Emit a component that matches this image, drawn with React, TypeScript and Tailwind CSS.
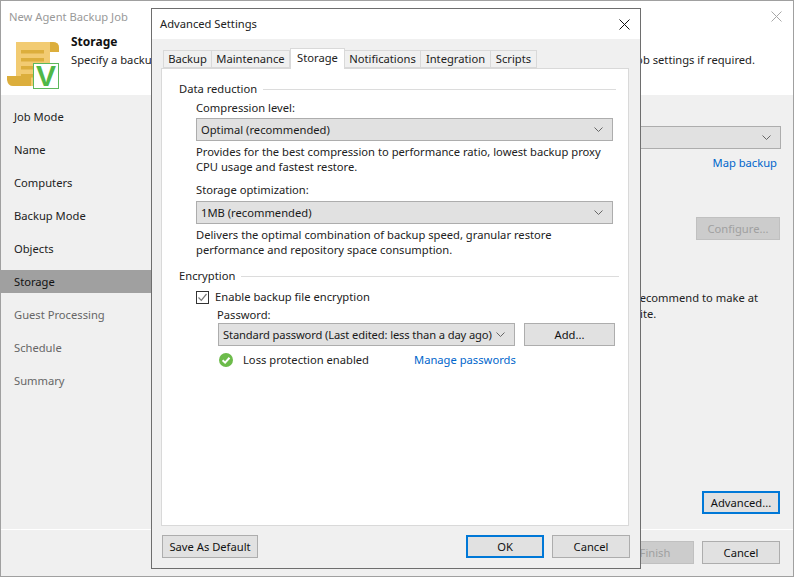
const Chevron = () => (
  <svg width="9" height="5" viewBox="0 0 9 5" className="shrink-0">
    <path d="M0.5 0.5 L4.5 4.5 L8.5 0.5" fill="none" stroke="#666" strokeWidth="1" />
  </svg>
);

const CloseIcon = ({ color }: { color: string }) => (
  <svg width="11" height="11" viewBox="0 0 11 11">
    <path d="M0.5 0.5 L10.5 10.5 M10.5 0.5 L0.5 10.5" fill="none" stroke={color} strokeWidth="1" />
  </svg>
);

const Combo = ({ text, className }: { text: string; className: string }) => (
  <div className={`flex h-[23px] items-center justify-between border border-[#adadad] bg-[#e1e1e1] pl-[4px] pr-[9px] text-[#1a1a1a] ${className}`}>
    <span className="whitespace-nowrap">{text}</span>
    <Chevron />
  </div>
);

const Button = ({ label, className, primary }: { label: string; className: string; primary?: boolean }) => (
  <div
    className={`flex h-[23px] items-center justify-center bg-[#e1e1e1] text-[#111] ${
      primary ? 'border-2 border-[#0078d7]' : 'border border-[#adadad]'
    } ${className}`}
  >
    {label}
  </div>
);

const ScrollLogo = () => (
  <div className="relative h-[47px] w-[52px] shrink-0">
    <svg width="52" height="47" viewBox="0 0 52 47" className="block">
      <path d="M9 0 H46 Q52 0 52 6 V10 H43 V44 H16 V34 H9 Z" fill="#f2cb72" />
      <path d="M43 0 H46 Q52 0 52 6 V10 H43 Z" fill="#dcae3c" />
      <path d="M0 34 H24 V44 H6 Q1 44 0 38 Z" fill="#dcae3c" />
      <rect x="14" y="8" width="23" height="3.5" fill="#dcae3c" />
      <rect x="14" y="16" width="23" height="3.5" fill="#dcae3c" />
      <rect x="14" y="24" width="12" height="3.5" fill="#dcae3c" />
      <rect x="14" y="32" width="12" height="3.5" fill="#dcae3c" />
    </svg>
    <div className="absolute left-[26px] top-[21px] flex h-[26px] w-[26px] items-center justify-center border border-[#5cb85c] bg-white font-['Liberation_Sans',sans-serif] text-[30px] font-bold leading-none text-[#4fb848]">
      V
    </div>
  </div>
);

const steps = ['Job Mode', 'Name', 'Computers', 'Backup Mode', 'Objects', 'Storage', 'Guest Processing', 'Schedule', 'Summary'];
const tabs = [
  { name: 'Backup', w: 'w-[49px]' },
  { name: 'Maintenance', w: 'w-[78px]' },
  { name: 'Storage', w: 'w-[55px]' },
  { name: 'Notifications', w: 'w-[76px]' },
  { name: 'Integration', w: 'w-[70px]' },
  { name: 'Scripts', w: 'w-[46px]' },
];

const GroupTitle = ({ title }: { title: string }) => (
  <div className="flex h-[16px] items-center gap-[6px]">
    <span className="whitespace-nowrap">{title}</span>
    <div className="h-px flex-1 bg-[#dcdcdc]" />
  </div>
);

const AdvancedSettings = () => (
  <div className="absolute left-[150px] top-[7px] flex h-[561px] w-[490px] flex-col border border-[#6e6e6e] bg-[#f0f0f0]">
    <div className="flex h-[30px] items-center justify-between bg-white pl-[8px] pr-[10px]">
      <span className="text-[#222]">Advanced Settings</span>
      <CloseIcon color="#111" />
    </div>
    {/* tabs */}
    <div className="relative z-10 flex h-[29px] items-end pl-[11px]">
      {tabs.map((t) =>
        t.name === 'Storage' ? (
          <div key={t.name} className={`-mb-px flex h-[21px] items-start justify-center border-x border-t border-[#d9d9d9] bg-white pt-px ${t.w}`}>
            {t.name}
          </div>
        ) : (
          <div key={t.name} className={`flex h-[18px] items-center justify-center border-y border-r border-[#d9d9d9] first:border-l ${t.w}`}>
            {t.name}
          </div>
        )
      )}
    </div>
    {/* panel */}
    <div className="ml-[9px] mr-[11px] flex h-[458px] flex-col border border-[#d9d9d9] bg-white pl-[17px] pr-[12px] pt-[12px]">
      <GroupTitle title="Data reduction" />
      <div className="pl-[17px] pr-[3px]">
        <div className="mt-[3px] h-[16px] leading-[16px]">Compression level:</div>
        <Combo text="Optimal (recommended)" className="mt-[2px] w-[417px]" />
        <p className="mt-[3px] whitespace-nowrap leading-[15px]">
          Provides for the best compression to performance ratio, lowest backup proxy
          <br />
          CPU usage and fastest restore.
        </p>
        <div className="mt-[8px] h-[16px] leading-[16px]">Storage optimization:</div>
        <Combo text="1MB (recommended)" className="mt-[3px] w-[417px]" />
        <p className="mt-[3px] whitespace-nowrap leading-[15px]">
          Delivers the optimal combination of backup speed, granular restore
          <br />
          performance and repository space consumption.
        </p>
      </div>
      <div className="-mr-[3px] mt-[11px]">
        <GroupTitle title="Encryption" />
      </div>
      <div className="pl-[17px]">
        <div className="mt-[5px] flex h-[16px] items-center gap-[6px]">
          <div className="flex h-[13px] w-[13px] items-center justify-center border border-[#333] bg-white">
            <svg width="11" height="11" viewBox="0 0 11 11">
              <path d="M1.5 5.5 L4.3 8.3 L9.5 2" fill="none" stroke="#777" strokeWidth="1.2" />
            </svg>
          </div>
          <span>Enable backup file encryption</span>
        </div>
        <div className="ml-[21px] mt-[2px] h-[16px] leading-[16px]">Password:</div>
        <div className="ml-[22px] flex gap-[9px]">
          <Combo text="Standard password (Last edited: less than a day ago)" className="w-[297px] tracking-[-0.13px]" />
          <Button label="Add..." className="w-[91px]" />
        </div>
        <div className="ml-[23px] mt-[6px] flex h-[16px] items-center">
          <svg width="14" height="14" viewBox="0 0 14 14" className="shrink-0">
            <circle cx="7" cy="7" r="7" fill="#6cbb4a" />
            <path d="M3.6 7.2 L6.1 9.6 L10.5 4.8" fill="none" stroke="#fff" strokeWidth="2" />
          </svg>
          <span className="ml-[10px] w-[171px]">Loss protection enabled</span>
          <span className="text-[#0066cc]">Manage passwords</span>
        </div>
      </div>
    </div>
    {/* bottom buttons */}
    <div className="flex items-center justify-between pl-[10px] pr-[10px] pt-[9px]">
      <Button label="Save As Default" className="w-[96px]" />
      <div className="flex gap-[8px]">
        <Button label="OK" className="w-[78px]" primary />
        <Button label="Cancel" className="w-[78px]" />
      </div>
    </div>
  </div>
);

export default function App() {
  return (
    <div className="relative flex h-[577px] w-[794px] flex-col overflow-hidden border border-[#a0a0a0] bg-[#f0f0f0] font-['Noto_Sans',sans-serif] text-[11.2px] leading-[16px] text-[#222]">
      {/* header */}
      <div className="h-[94px] bg-white">
        <div className="flex h-[31px] items-center justify-between pl-[8px] pr-[11px] text-[#999]">
          <span>New Agent Backup Job</span>
          <CloseIcon color="#a8a8a8" />
        </div>
        <div className="flex pl-[6px] pt-[10px]">
          <ScrollLogo />
          <div className="-mt-[8px] ml-[12px] flex-1 pr-[38px]">
            <div className="text-[12px] font-bold text-[#111]">Storage</div>
            <div className="mt-[2px] flex justify-between">
              <span>Specify a backup</span>
              <span>job settings if required.</span>
            </div>
          </div>
        </div>
      </div>

      {/* body */}
      <div className="flex h-[434px]">
        <div className="flex w-[150px] flex-col gap-[10px] pt-[10px]">
          {steps.map((s, i) => (
            <div
              key={s}
              className={`flex h-[23px] items-center pl-[13px] ${
                s === 'Storage' ? 'bg-[#a0a0a0] text-[#111]' : i > 5 ? 'text-[#666]' : 'text-[#222]'
              }`}
            >
              {s}
            </div>
          ))}
        </div>
        <div className="flex flex-1 flex-col items-end pb-[15px] pr-[12px] pt-[31px]">
          <div className="flex h-[23px] w-[141px] items-center justify-end border border-[#adadad] bg-[#e1e1e1] pr-[9px]">
            <Chevron />
          </div>
          <div className="mr-[4px] mt-[6px] text-[#0066cc]">Map backup</div>
          <div className="mr-px mt-[46px] flex h-[23px] w-[84px] items-center justify-center border border-[#c0c0c0] bg-[#cccccc] text-[#a0a0a0]">
            Configure...
          </div>
          <div className="mt-[50px] w-[141px] overflow-hidden whitespace-nowrap leading-[16px]">
            <div className="flex justify-end pr-[23px]">ecommend to make at</div>
            <div>ite.</div>
          </div>
          <Button label="Advanced..." className="mr-px mt-auto w-[78px]" primary />
        </div>
      </div>

      {/* footer */}
      <div className="flex flex-1 justify-end gap-[8px] border-t border-white pr-[13px] pt-[11px]">
        <div className="flex h-[23px] w-[78px] items-center justify-center border border-[#c0c0c0] bg-[#cccccc] text-[#a0a0a0]">
          Finish
        </div>
        <Button label="Cancel" className="w-[78px]" />
      </div>

      <AdvancedSettings />
    </div>
  );
}
